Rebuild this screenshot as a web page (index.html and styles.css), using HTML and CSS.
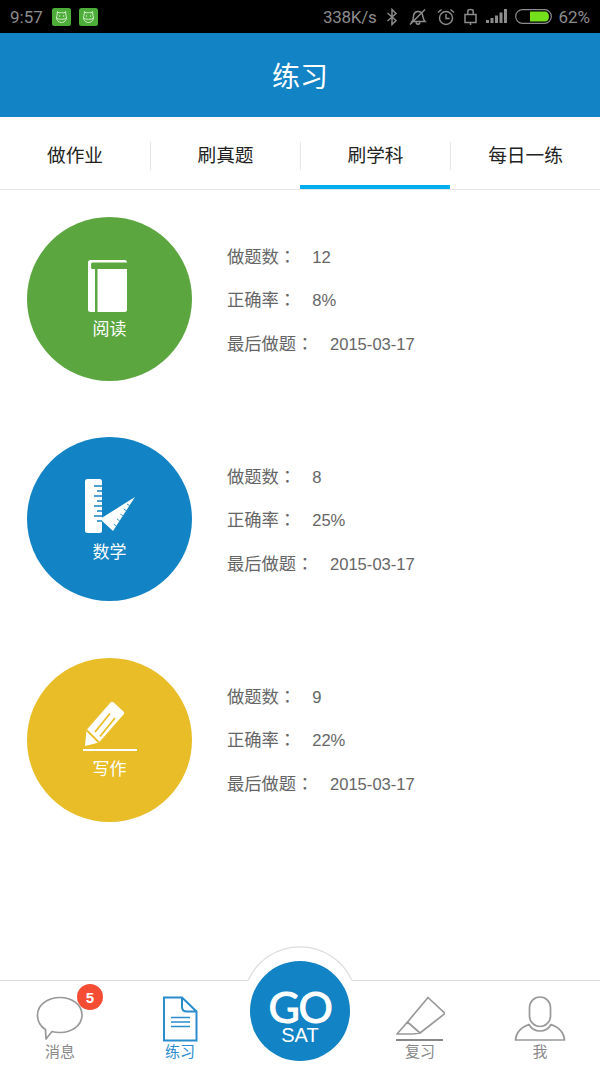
FILE: index.html
```html
<!DOCTYPE html>
<html lang="zh-CN">
<head>
<meta charset="utf-8">
<title>练习</title>
<link rel="stylesheet" href="styles.css">
</head>
<body>
<div class="app">
  <div class="status">
    <span class="time">9:57</span>
    <svg class="app-icon" viewBox="0 0 19 18"><rect width="19" height="18" rx="2.5" fill="#4cae38"/><path d="M5.500 3.500 7 5C8.500 4.500 10.500 4.500 12 5L13.500 3.500 14 7.500C15.500 11 13 14.500 9.500 14.500S3.500 11 5 7.500ZM4.600 10.500C7 11.500 12 11.500 14.400 10.500" fill="none" stroke="#d6efce" stroke-width="1"/><circle cx="7.500" cy="8" r=".7" fill="#d6efce"/><circle cx="11.500" cy="8" r=".7" fill="#d6efce"/></svg>
    <svg class="app-icon" viewBox="0 0 19 18"><rect width="19" height="18" rx="2.5" fill="#4cae38"/><path d="M5.500 3.500 7 5C8.500 4.500 10.500 4.500 12 5L13.500 3.500 14 7.500C15.500 11 13 14.500 9.500 14.500S3.500 11 5 7.500ZM4.600 10.500C7 11.500 12 11.500 14.400 10.500" fill="none" stroke="#d6efce" stroke-width="1"/><circle cx="7.500" cy="8" r=".7" fill="#d6efce"/><circle cx="11.500" cy="8" r=".7" fill="#d6efce"/></svg>
    <div class="status-right">
      <span class="speed">338K/s</span>
      <svg class="st-bt" viewBox="0 0 12 18"><path d="M1.500 5 10 12.500 6 16.500V1.500L10 5.500 1.500 13" fill="none" stroke="#8c8c8c" stroke-width="1.500"/></svg>
      <svg class="st-bell" viewBox="0 0 20 18"><path d="M4 13.500C6 11.500 5 9 5.800 6.500 7 3 12 2.500 14 5.500 15.300 8 14.500 11 17 13.500ZM8 14.500C8.500 16.800 11.500 16.800 12 14.500M2 16.500 17 1.500" fill="none" stroke="#8c8c8c" stroke-width="1.500"/></svg>
      <svg class="st-alarm" viewBox="0 0 18 18"><circle cx="9" cy="10" r="6.500" fill="none" stroke="#8c8c8c" stroke-width="1.400"/><path d="M9 6V10.500H12.500M1 4.500 4.500 1.500M17 4.500 13.500 1.500" fill="none" stroke="#8c8c8c" stroke-width="1.400"/></svg>
      <svg class="st-lock" viewBox="0 0 13 18"><path d="M1 6.500H12V14.500H1ZM3.800 6.500V3C3.800 1 9.200 1 9.200 3V6.500M6.500 14.500V17" fill="none" stroke="#8c8c8c" stroke-width="1.500"/></svg>
      <svg class="st-signal" viewBox="0 0 21 15"><g fill="#8c8c8c"><rect x="0" y="11" width="3" height="3"/><rect x="4.500" y="9" width="3" height="5"/><rect x="9" y="6.500" width="3" height="7.500"/><rect x="13.500" y="3.500" width="3" height="10.500"/><rect x="18" y="0" width="3" height="14"/></g></svg>
      <svg class="st-battery" viewBox="0 0 37 15"><rect x="0.700" y="0.700" width="35.600" height="13.600" rx="6.800" fill="none" stroke="#8c8c8c" stroke-width="1.200"/><path d="M15 2.500H30C32.500 2.500 34 4.500 34 7.500S32.500 12.500 30 12.500H15Z" fill="#74e01c"/></svg>
      <span class="pct">62%</span>
    </div>
  </div>

  <header class="title-bar">练习</header>

  <nav class="tabs">
    <div class="tab">做作业</div>
    <div class="tab">刷真题</div>
    <div class="tab tab-active">刷学科</div>
    <div class="tab">每日一练</div>
  </nav>

  <main class="subjects">
    <section class="subject">
      <div class="disc disc-green">
        <svg class="ico ico-book" viewBox="0 0 39 52"><rect width="39" height="52" rx="2.500" fill="#fff"/><path d="M5 2.500H39V9H5C3.500 9 3 8.500 3 5.700S3.500 2.500 5 2.500ZM7 9H9.500V52H7Z" fill="#5ca63f"/></svg>
        <span class="disc-label">阅读</span>
      </div>
      <div class="stats">
        <p class="stat"><span class="stat-key">做题数<span class="colon" lang="zh-TW">：</span></span><span class="stat-val">12</span></p>
        <p class="stat"><span class="stat-key">正确率<span class="colon" lang="zh-TW">：</span></span><span class="stat-val">8%</span></p>
        <p class="stat"><span class="stat-key">最后做题<span class="colon" lang="zh-TW">：</span></span><span class="stat-val stat-date">2015-03-17</span></p>
      </div>
    </section>

    <section class="subject">
      <div class="disc disc-blue">
        <svg class="ico ico-math" viewBox="0 0 52 56"><rect x="1" y="0" width="17" height="54" rx="2.500" fill="#fff"/><path d="M51 18 16 40 29 52Z" fill="#fff"/><path d="M10 7H18M13 12H18M10 17H18M13 22H18M10 27H18M13 32H18M10 37H18M13 42H18" stroke="#1283c4" stroke-width="1.400"/><path d="M45.500 26.500 43 25M42.200 31.600 39.700 30M38.900 36.700 36.400 35.100M35.600 41.800 33 40M32.300 46.900 29.800 45.300" stroke="#1283c4" stroke-width=".9"/></svg>
        <span class="disc-label">数学</span>
      </div>
      <div class="stats">
        <p class="stat"><span class="stat-key">做题数<span class="colon" lang="zh-TW">：</span></span><span class="stat-val">8</span></p>
        <p class="stat"><span class="stat-key">正确率<span class="colon" lang="zh-TW">：</span></span><span class="stat-val">25%</span></p>
        <p class="stat"><span class="stat-key">最后做题<span class="colon" lang="zh-TW">：</span></span><span class="stat-val stat-date">2015-03-17</span></p>
      </div>
    </section>

    <section class="subject subject-last">
      <div class="disc disc-yellow">
        <svg class="ico ico-pen" viewBox="0 0 54 52"><path d="M2 46 3.500 30 27.500 2.500C28.500 1.500 29.500 1.500 30.500 2.300L40.500 11.500C41.500 12.500 41.500 13.500 40.500 14.500L16 42.500Z" fill="#fff"/><path d="M3.500 30 16 42.500M12 32 27 13.500M17 36.500 32 18" fill="none" stroke="#e8bd27" stroke-width="1.800"/><path d="M0 50H54" stroke="#fff" stroke-width="2"/></svg>
        <span class="disc-label">写作</span>
      </div>
      <div class="stats">
        <p class="stat"><span class="stat-key">做题数<span class="colon" lang="zh-TW">：</span></span><span class="stat-val">9</span></p>
        <p class="stat"><span class="stat-key">正确率<span class="colon" lang="zh-TW">：</span></span><span class="stat-val">22%</span></p>
        <p class="stat"><span class="stat-key">最后做题<span class="colon" lang="zh-TW">：</span></span><span class="stat-val stat-date">2015-03-17</span></p>
      </div>
    </section>
  </main>

  <footer class="bottom-nav">
    <div class="nav-item">
      <svg class="nav-ico nav-bubble" viewBox="0 0 48 46"><path d="M24 1.500C36 1.500 46 8.800 46 19S36 36.500 24 36.500C21 36.500 18.500 36.300 16 35.500L10 43 9.500 33.500C4.500 30.500 1.500 25 1.500 19 1.500 8.800 12 1.500 24 1.500Z" fill="#fff" stroke="#999" stroke-width="1.700" stroke-linejoin="round"/></svg>
      <span class="nav-label">消息</span>
      <span class="badge">5</span>
    </div>
    <div class="nav-item nav-current">
      <svg class="nav-ico nav-doc" viewBox="0 0 36 46"><path d="M2 1.500H20L34.500 15.500V44.500H2ZM20 1.500V11C20 14 22 15.500 25 15.500H34.500" fill="none" stroke="#2a8ccf" stroke-width="2"/><path d="M9 21.500H28M9 26H28M9 30.500H28" stroke="#2a8ccf" stroke-width="1.500"/></svg>
      <span class="nav-label">练习</span>
    </div>
    <div class="nav-item nav-center">
      <svg class="bump" viewBox="0 0 108 36"><path d="M2 35A57 57 0 0 1 106 35Z" fill="#fff"/><path d="M2 34.500A57 57 0 0 1 106 34.500" fill="none" stroke="#dcdcdc" stroke-width="1.200"/></svg>
      <div class="go-button">
        <span class="go-word">GO</span>
        <span class="go-sat">SAT</span>
      </div>
    </div>
    <div class="nav-item">
      <svg class="nav-ico nav-marker" viewBox="0 0 50 46"><path d="M33 1.500 50 17.500 25 37 12.500 26ZM12.500 26 2 38H18L25 37" fill="none" stroke="#999" stroke-width="1.700" stroke-linejoin="round"/><path d="M1 44H48" stroke="#888" stroke-width="1.800"/></svg>
      <span class="nav-label">复习</span>
    </div>
    <div class="nav-item">
      <svg class="nav-ico nav-person" viewBox="0 0 52 46"><rect x="15.500" y="1" width="21" height="29.500" rx="10.500" fill="none" stroke="#999" stroke-width="1.700"/><path d="M1.500 44H50.500C50 36 44 31 37 28.500 34.500 33 30 35 26 35 22 35 17.500 33 15 28.500 8 31 2 36 1.500 44Z" fill="none" stroke="#999" stroke-width="1.700" stroke-linejoin="round"/></svg>
      <span class="nav-label">我</span>
    </div>
  </footer>
</div>
</body>
</html>
```

FILE: styles.css
```css
* { box-sizing: border-box; }
html, body { margin: 0; padding: 0; background: #fff; }
body { font-family: "Liberation Sans", "Noto Sans CJK SC", sans-serif; }
.app { width: 600px; height: 1067px; display: flex; flex-direction: column; overflow: hidden; background: #fff; }

.status { height: 33px; flex: none; background: #000; display: flex; align-items: center; padding: 0 10px; color: #8c8c8c; font-family: "Roboto", "Liberation Sans", sans-serif; font-size: 17px; }
.time { width: 42px; }
.app-icon { width: 19px; height: 18px; margin-right: 8px; }
.status-right { margin-left: auto; display: flex; align-items: center; }
.speed { margin-right: 10px; letter-spacing: -0.3px; }
.st-bt { width: 12px; height: 18px; margin-right: 10px; }
.st-bell { width: 20px; height: 18px; margin-right: 9px; }
.st-alarm { width: 18px; height: 18px; margin-right: 9px; }
.st-lock { width: 13px; height: 18px; margin-right: 9px; }
.st-signal { width: 21px; height: 15px; margin-right: 8px; }
.st-battery { width: 37px; height: 15px; margin-right: 6px; }

.title-bar { height: 84px; flex: none; background: #1283c4; color: #fff; font-family: "Noto Sans CJK SC", sans-serif; font-size: 28px; display: flex; align-items: center; justify-content: center; }

.tabs { height: 73px; flex: none; display: flex; align-items: flex-start; padding-top: 25px; border-bottom: 1px solid #e6e6e6; }
.tab { width: 150px; height: 28px; padding-bottom: 5px; display: flex; align-items: center; justify-content: center; font-family: "Noto Sans CJK SC", sans-serif; font-size: 18.7px; color: #222; position: relative; }
.tab + .tab { border-left: 1px solid #e6e6e6; }
.tab-active::after { content: ""; position: absolute; left: -1px; right: 0; top: 43px; height: 4px; background: #00aeef; }

.subjects { flex: 1; display: flex; flex-direction: column; gap: 56px; padding: 27px 0 0 27px; }
.subject { display: flex; align-items: center; height: 164px; }
.subject-last { margin-top: 1px; }
.subject-last .stats { margin-top: -2px; }
.disc { width: 165px; height: 164px; border-radius: 50%; display: flex; flex-direction: column; align-items: center; color: #fff; flex: none; }
.disc-green { background: #5ca63f; }
.disc-blue { background: #1283c4; }
.disc-yellow { background: #e8bd27; }
.ico { display: block; flex: none; }
.ico-book { width: 39px; height: 52px; margin-top: 43px; margin-right: 5px; }
.ico-math { width: 52px; height: 56px; margin-top: 42px; margin-left: 1px; }
.ico-pen { width: 54px; height: 52px; margin-top: 42px; }
.disc-label { font-family: "Noto Sans CJK SC", sans-serif; font-size: 17px; line-height: 24px; margin-top: 4px; }

.stats { margin-left: 35px; }
.stat { margin: 0; line-height: 43.5px; height: 43.5px; font-size: 16.6px; color: #666; white-space: nowrap; }
.stat-key { font-family: "Noto Sans CJK SC", sans-serif; font-size: 17.3px; }
.colon { font-family: "Noto Sans CJK TC", sans-serif; }
.stat-val { margin-left: 16px; }
.stat-date { margin-left: 16.5px; }

.bottom-nav { height: 87px; flex: none; display: flex; border-top: 1px solid #dcdcdc; background: #fff; }
.nav-item { width: 120px; position: relative; display: flex; flex-direction: column; align-items: center; padding-top: 15px; }
.nav-ico { display: block; height: 46px; flex: none; }
.nav-bubble { width: 48px; }
.nav-doc { width: 36px; }
.nav-marker { width: 50px; }
.nav-person { width: 52px; }
.nav-label { font-family: "Noto Sans CJK SC", sans-serif; font-size: 15px; line-height: 20px; margin-top: -1px; color: #888; }
.nav-current .nav-label { color: #2a8ccf; }
.badge { position: absolute; left: 77px; top: 3px; width: 26px; height: 26px; border-radius: 50%; background: #f44d33; color: #fff; font-size: 15px; font-weight: 700; display: flex; align-items: center; justify-content: center; }
.bump { position: absolute; left: 6px; top: -35px; width: 108px; height: 36px; }
.go-button { position: absolute; left: 10px; top: -20px; width: 100px; height: 100px; border-radius: 50%; background: #1283c4; color: #fff; display: flex; flex-direction: column; align-items: center; }
.go-word { font-family: "Lato", sans-serif; font-weight: 400; font-size: 43px; line-height: 32px; height: 32px; letter-spacing: -1.5px; -webkit-text-stroke: 1px #fff; margin-top: 30px; }
.go-sat { font-family: "Liberation Sans", sans-serif; font-size: 20px; line-height: 16px; height: 16px; margin-top: 4px; }
```
